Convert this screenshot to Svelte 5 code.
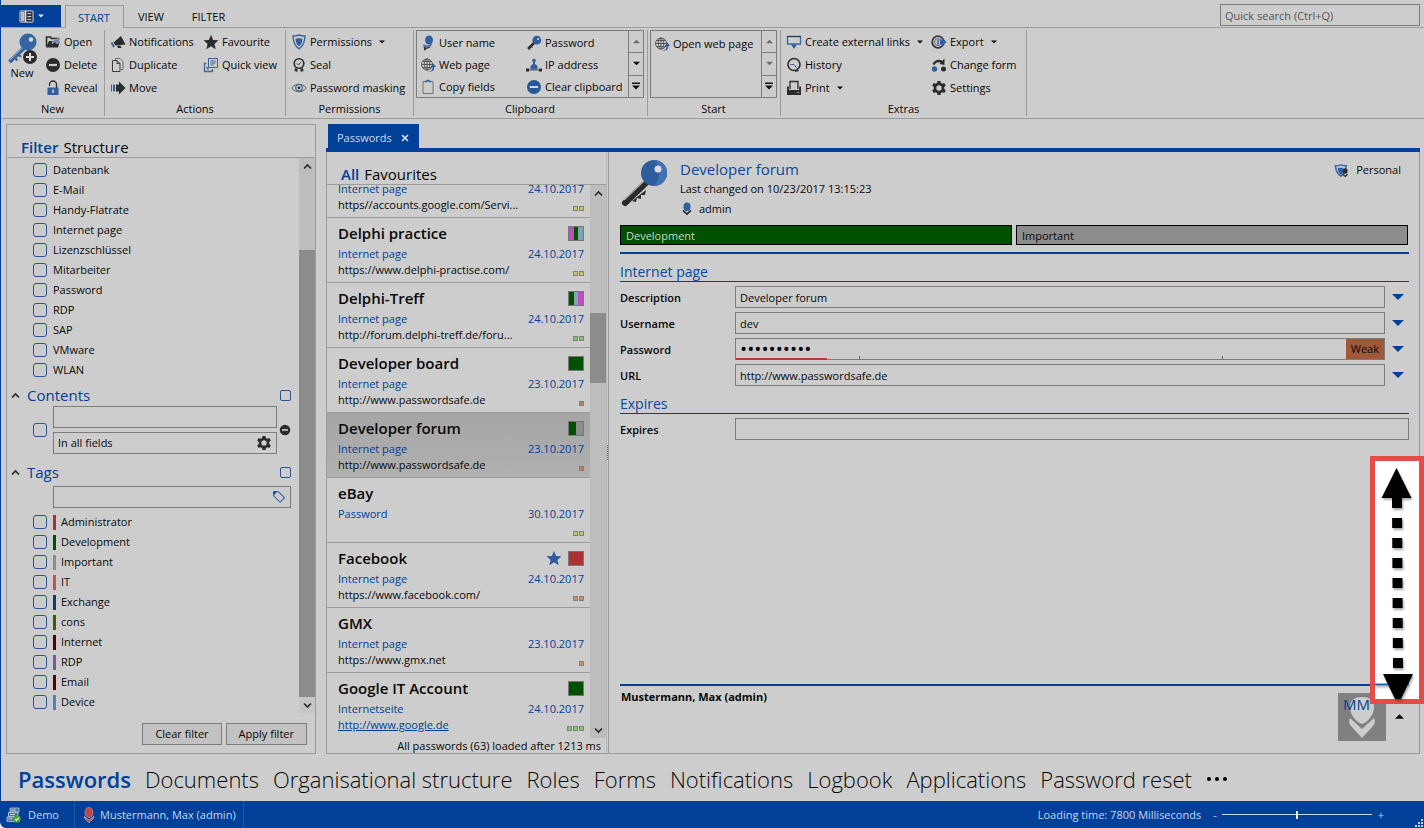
<script lang="ts">
	interface Entry {
		title: string;
		form: string;
		date: string;
		url?: string;
		link?: boolean;
		tags: string[];
		strength: string[];
		favourite?: boolean;
		selected?: boolean;
	}

	// --- Filter panel data ---
	const forms = ['Datenbank', 'E-Mail', 'Handy-Flatrate', 'Internet page', 'Lizenzschlüssel', 'Mitarbeiter', 'Password', 'RDP', 'SAP', 'VMware', 'WLAN'];

	const tags = [
		{ name: 'Administrator', color: '#a93232' },
		{ name: 'Development', color: '#005000' },
		{ name: 'Important', color: '#8c8c8c' },
		{ name: 'IT', color: '#c25450' },
		{ name: 'Exchange', color: '#143a6e' },
		{ name: 'cons', color: '#3c5a00' },
		{ name: 'Internet', color: '#560000' },
		{ name: 'RDP', color: '#76589c' },
		{ name: 'Email', color: '#560000' },
		{ name: 'Device', color: '#4f82c0' }
	];

	// --- Password list data ---
	const GREEN = '#005000';
	const PINK = '#b850c0';
	const TEAL = '#80a4b0';
	const YELLOW = '#c2c46e';
	const ORANGE = '#c8956a';
	const BROWN = '#b47c64';
	const LIME = '#86c070';

	const entries: Entry[] = [
		{ title: '', form: 'Internet page', date: '24.10.2017', url: 'https//accounts.google.com/Servi...', tags: [], strength: [YELLOW, YELLOW] },
		{ title: 'Delphi practice', form: 'Internet page', date: '24.10.2017', url: 'https://www.delphi-practise.com/', tags: [PINK, GREEN, TEAL], strength: [YELLOW, YELLOW] },
		{ title: 'Delphi-Treff', form: 'Internet page', date: '24.10.2017', url: 'http://forum.delphi-treff.de/foru...', tags: [GREEN, TEAL, PINK], strength: [LIME, LIME] },
		{ title: 'Developer board', form: 'Internet page', date: '23.10.2017', url: 'http://www.passwordsafe.de', tags: [GREEN], strength: [BROWN] },
		{ title: 'Developer forum', form: 'Internet page', date: '23.10.2017', url: 'http://www.passwordsafe.de', tags: [GREEN, '#8c8c8c'], strength: [BROWN], selected: true },
		{ title: 'eBay', form: 'Password', date: '30.10.2017', tags: [], strength: [YELLOW, YELLOW] },
		{ title: 'Facebook', form: 'Internet page', date: '24.10.2017', url: 'https://www.facebook.com/', tags: ['#a93232'], strength: [ORANGE, ORANGE], favourite: true },
		{ title: 'GMX', form: 'Internet page', date: '23.10.2017', url: 'https://www.gmx.net', tags: [], strength: [ORANGE] },
		{ title: 'Google IT Account', form: 'Internetseite', date: '24.10.2017', url: 'http://www.google.de', link: true, tags: [GREEN], strength: [LIME, LIME, LIME] }
	];

	const modules = ['Passwords', 'Documents', 'Organisational structure', 'Roles', 'Forms', 'Notifications', 'Logbook', 'Applications', 'Password reset'];

	let activeModule = $state('Passwords');
	let zoom = $state(50);

	// --- Icons, all on a 16x16 grid ---
	const icons: Record<string, string> = {
		file: '<rect x="1" y="2" width="14" height="12" rx="1" fill="#2a2f3a" stroke="#e2e2e2"/><path d="M7 2v12" stroke="#e2e2e2" stroke-width="1.5"/><path d="M2 3h4v10H2z" fill="#b9c4d2"/><path d="M9 5h4M9 8h4M9 11h4" stroke="#e2e2e2"/>',
		open: '<path d="M1.500 12.500V3h4l1 1.500h7V6" fill="none" stroke="#2b2b2b" stroke-width="1.600"/><path fill="#2b2b2b" d="M1 13.500l3-6.500h11l-2 6.500z"/><path fill="#6d87a6" stroke="#cdcdcd" stroke-width=".5" d="M7 10c0-3.500 3-5.500 5-4.500l.8-1.500 2.700 5-4.500.5.700-1.200C10 7.800 8.500 8 7 10z"/>',
		delete: '<circle cx="8" cy="8" r="7" fill="#2b2b2b"/><path d="M4 8h8" stroke="#cdcdcd" stroke-width="2.200"/>',
		reveal: '<path d="M4.500 6V4.500a3.500 3.500 0 0 1 7 0V8" fill="none" stroke="#2b2b2b" stroke-width="1.300"/><rect x="2.500" y="7.500" width="11" height="7.500" fill="#2f5f9e"/><path d="M8 9.500V13" stroke="#cdcdcd" stroke-width="1.600"/>',
		notify: '<path fill="#2b2b2b" d="M3.500 8.500L11 2l4.500 8.500-10 1zM7 12l3.500-.4 1 2.400H8z"/><path d="M1.500 8.500L4 13" stroke="#3f5f9b" stroke-width="2"/>',
		duplicate: '<path d="M5.500 4V1.500h4.500l3 3v8h-2" fill="none" stroke="#5a6b86"/><path d="M2.500 3.500h4.500l3 3v8H2.500zM7 3.500v3h3" fill="#cdcdcd" stroke="#3c3c3c"/>',
		move: '<path fill="#2b2b2b" d="M6 4.500h3V1.500l6.500 6.500L9 14.500v-3H6z"/><path fill="#2f5f9e" d="M3 4.500h2v7H3zM1 4.500h1v7H1z"/>',
		star: '<path fill="#2b2b2b" d="M8 .8l2.100 5.100 5.400.4-4.100 3.600 1.300 5.300L8 12.300l-4.700 2.900 1.300-5.300L.5 6.300l5.400-.4z"/>',
		quick: '<path d="M5.500 1.500h9v9h-9z" fill="none" stroke="#3b5f92"/><path d="M7.500 4h5M7.500 6h5M7.500 8h3" stroke="#3b5f92"/><path d="M3.500 6.500h-2v8h8V12M3.500 10l2 2.500" fill="none" stroke="#49678f" stroke-width="1.300"/>',
		shield: '<path d="M8 1c2 .8 4 1.200 6 1-.2 6-1.500 10-6 12.800C3.500 12 2.200 8 2 2c2 .2 4-.2 6-1z" fill="none" stroke="#3b64a0" stroke-width="1.400"/><path fill="#2f5f9e" d="M8 4c1.300.5 2.200.7 3.500.7C11.300 8.500 10.300 10.500 8 12.300 5.700 10.500 4.700 8.500 4.500 4.700 5.800 4.700 6.700 4.500 8 4z"/>',
		seal: '<circle cx="8" cy="6.500" r="4.800" fill="none" stroke="#2b2b2b" stroke-width="1.600"/><path d="M6 6.500l1.500 1.500L10 5" fill="none" stroke="#444"/><path fill="#2b2b2b" d="M4 11l2.800 1.500L6 15.500 5 14l-1.500.5zM12 11l-2.800 1.500.8 3L11 14l1.500.5z"/>',
		eye: '<path d="M.8 8C4 3 12 3 15.200 8 12 13 4 13 .8 8z" fill="none" stroke="#5a6472"/><circle cx="8" cy="7.800" r="3.300" fill="none" stroke="#3d5c86" stroke-width="1.200"/><circle cx="8" cy="7.800" r="1.400" fill="#2b2b2b"/>',
		user: '<ellipse cx="9" cy="5" rx="4" ry="4.500" fill="#2f5f9e"/><path d="M3.500 9.500c1 2.500 5 2.500 8-.3" fill="none" stroke="#2f5f9e" stroke-width="1.500"/><path fill="#2b2b2b" d="M3.500 11.500c3 1.500 5 1 7.500-.5-1 2-2.500 2.500-4.500 2.800L4.500 16z"/>',
		globe: '<g fill="none" stroke="#4c4c4c" stroke-width=".9"><circle cx="7" cy="7.500" r="5.500"/><ellipse cx="7" cy="7.500" rx="2.700" ry="5.500"/><path d="M7 2v11M1.500 7.500h11M2.500 4.500h9M2.500 10.500h9"/></g><path fill="#2f5f9e" d="M8.500 14.500c3 0 4.200-2 4-4.500H10.800L13.400 6.500 16 10h-1.600c.2 3.500-2.200 5.300-5.900 4.500z"/>',
		copy: '<path d="M5 2.500H3v12h10v-12h-2" fill="none" stroke="#6a6a6a" stroke-width=".9"/><path d="M5 2.500h1.500l.8-1h1.400l.8 1H11" fill="none" stroke="#2f5f9e" stroke-width="1.500"/>',
		key: '<path d="M8.500 7.500L2 14" stroke="#2b2b2b" stroke-width="2.600"/><path d="M5 11l1.500 1.500M3 13l1.300 1.300" stroke="#2b2b2b"/><circle cx="10.800" cy="5.200" r="4.400" fill="#2f5f9e"/><circle cx="12.200" cy="4" r="1.100" fill="#cdcdcd"/>',
		ip: '<path fill="#2f5f9e" d="M7 3h2v4l2.500 2v3.500h-7V9L7 7z"/><circle cx="8" cy="3.500" r="1.800" fill="#2f5f9e"/><path d="M0 13h16" stroke="#555"/><path fill="#2b2b2b" d="M0 11.500h3v3H0zM13 11.500h3v3h-3z"/>',
		clear: '<circle cx="8" cy="8" r="7" fill="#2a5796"/><path d="M3.800 8h8.400" stroke="#d6d6d6" stroke-width="2"/>',
		links: '<path d="M1.500 2.500h13v7.500h-13z" fill="none" stroke="#3b64a0" stroke-width="1.300"/><path d="M1 2.500h14" stroke="#333c4c"/><path fill="#2f5f9e" d="M5 10.500h6L8 15z"/>',
		history: '<circle cx="8" cy="7.500" r="6" fill="none" stroke="#2b2b2b" stroke-width="1.600"/><path d="M4.500 7.500H8l3 4" fill="none" stroke="#3b5f92"/><path d="M9 14l3.500-.5" stroke="#2b2b2b" stroke-width="1.500"/>',
		print: '<path d="M4 9V1.500h8V9" fill="none" stroke="#2b2b2b" stroke-width="1.300"/><path fill="#2b2b2b" d="M1 6.500h1.800V10h10.400V6.500H15V15H1z"/><path d="M10.500 12.500h3" stroke="#8a8a8a"/>',
		export: '<circle cx="7" cy="8" r="5.800" fill="none" stroke="#3a3a3a" stroke-width="1.800"/><circle cx="7" cy="8" r="3.500" fill="none" stroke="#6c6c6c"/><path d="M7 5.500v5" stroke="#2f5f9e" stroke-width="1.500"/><path fill="#2f5f9e" d="M9 5.500h2V3.500L15.500 8 11 12.500v-2H9z"/>',
		change: '<circle cx="3.500" cy="12" r="2.700" fill="#2f5f9e"/><circle cx="12.500" cy="12" r="2.500" fill="#2b2b2b"/><path d="M2.500 7.500C4 4 8 3 11 5" fill="none" stroke="#2b2b2b" stroke-width="2.400"/><path fill="#2b2b2b" d="M13.500 1.500V8L8.500 7z"/>',
		gear: '<path fill="#2b2b2b" fill-rule="evenodd" d="M6.500 1h3l.4 2 1.400.8 2-.8 1.500 2.600-1.600 1.400v2l1.600 1.400-1.500 2.600-2-.8-1.400.8-.4 2h-3l-.4-2-1.400-.8-2 .8-1.500-2.600L2.800 9V7L1.200 5.600 2.700 3l2 .8L6.100 3zM8 5.300a2.700 2.700 0 1 0 0 5.400 2.700 2.700 0 0 0 0-5.400z"/>',
		person: '<ellipse cx="8" cy="5.500" rx="4" ry="4.800" fill="#2f5f9e"/><path d="M3.500 9.500L8 13.800l4.500-4.300" fill="none" stroke="#2b2b2b" stroke-width="2"/>',
		personal: '<path d="M7.500 2c2 .8 3.500 1 5.500 1-.2 6-1.500 8.500-5.500 11C3.500 11.500 2 8 1.500 3c2 0 4-.2 6-1z" fill="none" stroke="#3b64a0" stroke-width="1.600"/><path fill="#2f5f9e" d="M4 5h6v6l-2.500 1.500C5 11 4 8 4 5z"/><ellipse cx="12" cy="8.500" rx="2.500" ry="3" fill="#2b2b2b"/><path d="M9.500 12l2.500 2.300 2.500-2.300" fill="none" stroke="#2b2b2b" stroke-width="1.400"/>',
		tag: '<path d="M2 2h5.500l6.800 6.800-5 5L2 7z" fill="none" stroke="#3b64a0" stroke-width="1.300"/><path fill="#1d4b8c" d="M1.500 1.500h4.500L2 6.500z"/><circle cx="5" cy="5" r="1" fill="#cdcdcd"/>',
		server: '<path fill="#4b6f9d" stroke="#c5ced8" stroke-width=".8" d="M5 1h9v4H5zM3.500 5.500H13v4H3.500zM2 10h9v4.500H2z"/><path d="M6 3h5M5 7.500h5M3.500 12h4" stroke="#d0d6dd"/><circle cx="12" cy="12" r="3.700" fill="#47a33a"/><path d="M10.200 12l1.400 1.400 2.300-2.700" fill="none" stroke="#dff0da" stroke-width="1.200"/>',
		login: '<ellipse cx="8" cy="5.500" rx="4" ry="5" fill="#c04444" stroke="#d8a8a8" stroke-width=".6"/><path d="M3 9.500c1 3 3 4.500 5 6 2-1.500 4-3 5-6l-5 3.500z" fill="#a03c48" stroke="#d0c0c8" stroke-width=".8"/>'
	};
</script>

{#snippet icon(name: string, size = 16)}
	<svg class="icon" width={size} height={size} viewBox="0 0 16 16" aria-hidden="true">{@html icons[name]}</svg>
{/snippet}

{#snippet arrow(dir: string, size = 6)}
	<svg class="icon" width={size} height={size} viewBox="0 0 8 8" aria-hidden="true">
		<path d={dir === 'up' ? 'M0 6l4-4 4 4z' : 'M0 2l4 4 4-4z'} fill="currentColor" />
	</svg>
{/snippet}

{#snippet chevron(dir: string)}
	<svg class="icon" width="9" height="9" viewBox="0 0 9 9" aria-hidden="true">
		<path d={dir === 'up' ? 'M1 6.500L4.500 3 8 6.500' : 'M1 2.500L4.500 6 8 2.500'} fill="none" stroke="#2b2b2b" stroke-width="1.700" />
	</svg>
{/snippet}

{#snippet cmd(name: string, label: string, drop = false)}
	<button class="cmd">
		{@render icon(name)}<span>{label}</span>
		{#if drop}{@render arrow('down')}{/if}
	</button>
{/snippet}

{#snippet spinner(canPage: boolean)}
	<div class="spinner">
		<button disabled aria-label="Previous">{@render arrow('up', 7)}</button>
		<button disabled={!canPage} aria-label="Next">{@render arrow('down', 7)}</button>
		<button aria-label="Show all">
			<svg width="8" height="8" viewBox="0 0 8 8" aria-hidden="true"><path d="M0 .5h8v1.500H0zM0 3.500h8l-4 4z" fill="#111" /></svg>
		</button>
	</div>
{/snippet}

<div class="app">
	<div class="tabs">
		<button class="file-menu" aria-label="Application menu">
			{@render icon('file', 15)}
			{@render arrow('down')}
		</button>
		<button class="ribbon-tab active">START</button>
		<button class="ribbon-tab">VIEW</button>
		<button class="ribbon-tab">FILTER</button>
		<input class="quick-search" type="search" placeholder="Quick search (Ctrl+Q)" aria-label="Quick search" />
	</div>

	<div class="ribbon">
		<section class="group g-new">
			<div class="commands">
				<button class="big">
					<svg width="32" height="32" viewBox="0 0 32 32" aria-hidden="true">
						<path d="M19 14L3.500 29" stroke="#3a6299" stroke-width="4" />
						<path d="M17.500 14L4 27" stroke="#9fb2cb" stroke-width="1" />
						<path d="M9 25l2.500 2.500M12.500 21.500l2.500 2.500" stroke="#3a6299" stroke-width="2" />
						<circle cx="22" cy="9" r="8.500" fill="#3565a3" />
						<circle cx="25" cy="6.500" r="2.200" fill="#d8d8d8" />
						<circle cx="24" cy="24" r="7" fill="#2b2b2b" />
						<path d="M20 24h8M24 20v8" stroke="#dedede" stroke-width="2" />
					</svg>
					<span>New</span>
				</button>
				<div class="col">
					{@render cmd('open', 'Open')}
					{@render cmd('delete', 'Delete')}
					{@render cmd('reveal', 'Reveal')}
				</div>
			</div>
			<h2>New</h2>
		</section>
		<section class="group g-actions">
			<div class="commands inset">
				<div class="col">
					{@render cmd('notify', 'Notifications')}
					{@render cmd('duplicate', 'Duplicate')}
					{@render cmd('move', 'Move')}
				</div>
				<div class="col">
					{@render cmd('star', 'Favourite')}
					{@render cmd('quick', 'Quick view')}
				</div>
			</div>
			<h2>Actions</h2>
		</section>
		<section class="group g-permissions">
			<div class="commands inset">
				<div class="col">
					{@render cmd('shield', 'Permissions', true)}
					{@render cmd('seal', 'Seal')}
					{@render cmd('eye', 'Password masking')}
				</div>
			</div>
			<h2>Permissions</h2>
		</section>
		<section class="group g-clipboard">
			<div class="gallery">
				<div class="col">
					{@render cmd('user', 'User name')}
					{@render cmd('globe', 'Web page')}
					{@render cmd('copy', 'Copy fields')}
				</div>
				<div class="col">
					{@render cmd('key', 'Password')}
					{@render cmd('ip', 'IP address')}
					{@render cmd('clear', 'Clear clipboard')}
				</div>
				{@render spinner(true)}
			</div>
			<h2>Clipboard</h2>
		</section>
		<section class="group g-start">
			<div class="gallery">
				<div class="col">
					{@render cmd('globe', 'Open web page')}
				</div>
				{@render spinner(false)}
			</div>
			<h2>Start</h2>
		</section>
		<section class="group g-extras">
			<div class="commands inset">
				<div class="col">
					{@render cmd('links', 'Create external links', true)}
					{@render cmd('history', 'History')}
					{@render cmd('print', 'Print', true)}
				</div>
				<div class="col">
					{@render cmd('export', 'Export', true)}
					{@render cmd('change', 'Change form')}
					{@render cmd('gear', 'Settings')}
				</div>
			</div>
			<h2>Extras</h2>
		</section>
	</div>

	<main>
		<aside class="filter">
			<div class="pane-head">
				<button class="current">Filter</button>
				<button>Structure</button>
			</div>
			<div class="scroll-area">
				<div class="filter-body">
					{#each forms as form}
						<label class="check-row"><input type="checkbox" /><span>{form}</span></label>
					{/each}

					<div class="section-head">
						{@render chevron('up')}
						<h3>Contents</h3>
						<input class="small" type="checkbox" aria-label="Link contents" />
					</div>
					<div class="contents">
						<input type="checkbox" aria-label="Use contents filter" />
						<div class="fields">
							<input class="box" type="text" aria-label="Search text" />
							<div class="box with-icon">
								<select aria-label="Search in"><option>In all fields</option></select>
								<button aria-label="Field settings">{@render icon('gear')}</button>
							</div>
						</div>
						<button aria-label="Remove">{@render icon('delete', 12)}</button>
					</div>

					<div class="section-head tags-head">
						{@render chevron('up')}
						<h3>Tags</h3>
						<input class="small" type="checkbox" aria-label="Link tags" />
					</div>
					<div class="box with-icon tag-search">
						<input type="text" aria-label="Search tags" />
						<button aria-label="Choose tag">{@render icon('tag', 14)}</button>
					</div>
					{#each tags as tag}
						<label class="check-row">
							<input type="checkbox" />
							<i class="stripe" style="background: {tag.color}"></i>
							<span>{tag.name}</span>
						</label>
					{/each}
				</div>
				<div class="scrollbar">
					<span class="end">{@render chevron('up')}</span>
					<span class="filter-gap"></span>
					<span class="thumb filter-thumb"></span>
					<span class="end light">{@render chevron('down')}</span>
				</div>
			</div>
			<div class="filter-actions">
				<button class="push">Clear filter</button>
				<button class="push">Apply filter</button>
			</div>
		</aside>

		<div class="workspace">
			<div class="doc-tabs">
				<div class="doc-tab">
					<span>Passwords</span>
					<button aria-label="Close tab">
						<svg width="8" height="8" viewBox="0 0 8 8" aria-hidden="true"><path d="M1 1l6 6M7 1L1 7" stroke="#d8e2ee" stroke-width="1.600" /></svg>
					</button>
				</div>
			</div>
			<div class="doc">
				<div class="list-pane">
					<div class="pane-head">
						<button class="current">All</button>
						<button>Favourites</button>
					</div>
					<div class="scroll-area">
						<ul class="entries">
							{#each entries as entry}
								<li class:selected={entry.selected}>
									<div class="line title-line">
										<h4>{entry.title}</h4>
										{#if entry.favourite}
											<svg class="icon" width="16" height="16" viewBox="0 0 16 16" aria-hidden="true">
												<path fill="#2c5a9c" d="M8 .8l2.100 5.100 5.400.4-4.100 3.600 1.300 5.300L8 12.300l-4.700 2.900 1.300-5.300L.5 6.300l5.400-.4z" />
											</svg>
										{/if}
										{#if entry.tags.length}
											<div class="swatch">
												{#each entry.tags as color}<i style="background: {color}"></i>{/each}
											</div>
										{/if}
									</div>
									<div class="line meta"><span>{entry.form}</span><span>{entry.date}</span></div>
									<div class="line">
										{#if entry.link}<a href="#open">{entry.url}</a>{:else}<span>{entry.url ?? ''}</span>{/if}
										<div class="strength">
											{#each entry.strength as color}<i style="background: {color}"></i>{/each}
										</div>
									</div>
								</li>
							{/each}
						</ul>
						<div class="scrollbar">
							<span class="end">{@render chevron('up')}</span>
							<span class="list-gap"></span>
							<span class="thumb list-thumb"></span>
							<span class="rest"></span>
							<span class="end">{@render chevron('down')}</span>
						</div>
					</div>
					<p class="list-status">All passwords (63) loaded after 1213 ms</p>
				</div>

				<div class="splitter"><span></span></div>

				<div class="detail">
					<header>
						<svg class="icon" width="48" height="48" viewBox="0 0 48 48" aria-hidden="true">
							<path d="M28 21L5 43" stroke="#2b2b2b" stroke-width="6" stroke-linecap="round" />
							<path d="M25 20L4 40" stroke="#a8a8a8" stroke-width="1.500" />
							<path d="M12 41l4 1 1-4 4 1 0-4 4 0 1-5" fill="#2b2b2b" />
							<circle cx="34" cy="13" r="13" fill="#2f5c9c" />
							<path d="M34 26a13 13 0 0 0 0-26c7 7 7 19 0 26z" fill="#3f72b4" />
							<circle cx="38" cy="9" r="3.500" fill="#dcdcdc" />
						</svg>
						<div class="heading">
							<h1>Developer forum</h1>
							<p class="changed">Last changed on 10/23/2017 13:15:23</p>
							<p class="owner">{@render icon('person', 14)}<span>admin</span></p>
						</div>
						<div class="personal">{@render icon('personal', 15)}<span>Personal</span></div>
					</header>

					<div class="tag-bars">
						<span class="bar dev">Development</span>
						<span class="bar important">Important</span>
					</div>

					<form>
						<h3>Internet page</h3>
						<div class="field">
							<label for="description">Description</label>
							<input id="description" class="box" type="text" value="Developer forum" />
							<button type="button" aria-label="Description menu">{@render arrow('down', 12)}</button>
						</div>
						<div class="field">
							<label for="username">Username</label>
							<input id="username" class="box" type="text" value="dev" />
							<button type="button" aria-label="Username menu">{@render arrow('down', 12)}</button>
						</div>
						<div class="field">
							<label for="password">Password</label>
							<div class="box password">
								<input id="password" type="password" value="passwordab" />
								<span class="badge">Weak</span>
								<span class="meter"></span>
								<i class="tick first"></i>
								<i class="tick second"></i>
							</div>
							<button type="button" aria-label="Password menu">{@render arrow('down', 12)}</button>
						</div>
						<div class="field">
							<label for="url">URL</label>
							<input id="url" class="box" type="text" value="http://www.passwordsafe.de" />
							<button type="button" aria-label="URL menu">{@render arrow('down', 12)}</button>
						</div>
						<h3>Expires</h3>
						<div class="field">
							<label for="expires">Expires</label>
							<input id="expires" class="box" type="text" />
						</div>
					</form>

					<footer>
						<strong>Mustermann, Max (admin)</strong>
						<svg class="avatar" width="48" height="48" viewBox="0 0 48 48" role="img" aria-label="MM">
							<rect width="48" height="48" fill="#808080" />
							<path fill="#cdcdcd" d="M24 4c7 0 12 3 12 10 0 8-6 15-12 17-6-2-12-9-12-17 0-7 5-10 12-10z" />
							<path fill="#cdcdcd" d="M12 25l12 11 12-11c1.500 3 1 6-1 8L24 45 13 33c-2-2-2.500-5-1-8z" />
							<text x="5" y="17" font-size="15" fill="#00438f">MM</text>
						</svg>
						<button class="expand" aria-label="Expand footer">{@render arrow('up', 9)}</button>
					</footer>

					<div class="resize-hint">
						<svg width="44" height="238" viewBox="0 0 44 238" aria-hidden="true">
							<path d="M0 223.500h34" stroke="#1668c0" stroke-width="2" />
							<path d="M21.500 7L36.500 37h-30z" />
							<path d="M22 37L23 207" stroke="#000" stroke-width="10" stroke-dasharray="10 10" />
							<path d="M8 213h30L26 238h-6z" />
						</svg>
					</div>
				</div>
			</div>
		</div>
	</main>

	<nav>
		{#each modules as name}
			<button class:active={name === activeModule} onclick={() => (activeModule = name)}>{name}</button>
		{/each}
		<button aria-label="More modules">
			<svg width="22" height="6" viewBox="0 0 22 6" aria-hidden="true">
				<circle cx="3" cy="3" r="2" /><circle cx="11" cy="3" r="2" /><circle cx="19" cy="3" r="2" />
			</svg>
		</button>
	</nav>

	<div class="status">
		<span class="cell demo">{@render icon('server')}<span>Demo</span></span>
		<span class="cell login">{@render icon('login')}<span>Mustermann, Max (admin)</span></span>
		<span class="loading">Loading time: 7800 Milliseconds</span>
		<button aria-label="Zoom out">-</button>
		<input type="range" min="0" max="100" bind:value={zoom} aria-label="Zoom" />
		<button aria-label="Zoom in">+</button>
		<svg class="grip" width="9" height="9" viewBox="0 0 9 9" aria-hidden="true">
			<path fill="#c5d4e8" d="M6 0h2v2H6zM3 3h2v2H3zM6 3h2v2H6zM0 6h2v2H0zM3 6h2v2H3zM6 6h2v2H6z" />
		</svg>
	</div>
</div>

<style>
	:global(body) {
		margin: 0;
		background: #fff;
	}

	.app {
		--bg: #cdcdcd;
		--blue: #004099;
		--line: #9c9c9c;
		--field: #7c7c7c;
		display: flex;
		flex-direction: column;
		height: 100vh;
		min-height: 700px;
		box-sizing: border-box;
		overflow: hidden;
		background: var(--bg);
		border-left: 1px solid var(--blue);
		border-bottom-left-radius: 6px;
		font: 11px/16px "Segoe UI", "Open Sans", "Noto Sans", sans-serif;
		color: #080808;
	}

	.app * {
		box-sizing: border-box;
	}

	button,
	input,
	select {
		font: inherit;
		color: inherit;
	}

	button {
		display: flex;
		align-items: center;
		padding: 0;
		border: none;
		background: none;
		white-space: nowrap;
	}

	h1,
	h2,
	h3,
	h4,
	p,
	ul {
		margin: 0;
		padding: 0;
		font-size: inherit;
		font-weight: normal;
		list-style: none;
	}

	.icon {
		display: block;
		flex: none;
	}

	/* --- Ribbon --- */
	.tabs {
		display: flex;
		align-items: flex-end;
		height: 28px;
		flex: none;
		padding-right: 4px;
		border-bottom: 1px solid var(--line);
	}

	.file-menu {
		width: 60px;
		height: 22px;
		gap: 4px;
		justify-content: center;
		background: var(--blue);
		color: #dfe6ee;
		margin-right: 4px;
	}

	.ribbon-tab {
		height: 22px;
		padding: 2px 14px 0;
	}

	.ribbon-tab.active {
		height: 23px;
		margin-bottom: -1px;
		padding: 1px 13px 0 12px;
		border: 1px solid var(--line);
		border-bottom: none;
		background: var(--bg);
		color: var(--blue);
	}

	.quick-search {
		width: 200px;
		height: 22px;
		margin: 0 0 1px auto;
		padding: 0 4px;
		border: 1px solid var(--field);
		background: none;
		outline: none;
	}

	.quick-search::placeholder {
		color: #555;
		opacity: 1;
	}

	.ribbon {
		display: flex;
		flex: none;
		height: 91px;
		padding: 2px 0;
		border-bottom: 1px solid var(--line);
	}

	.group {
		display: flex;
		flex-direction: column;
		flex: none;
		border-right: 1px solid var(--line);
	}

	.group h2 {
		height: 16px;
		text-align: center;
	}

	.commands,
	.gallery {
		display: flex;
		flex: none;
	}

	.commands {
		height: 71px;
	}

	.inset {
		padding-left: 5px;
	}

	.col {
		display: flex;
		flex-direction: column;
	}

	.cmd {
		height: 23px;
		gap: 3px;
	}

	.cmd span {
		padding-right: 4px;
	}

	.big {
		flex-direction: column;
		width: 36px;
		margin: 3px 5px 0 3px;
	}

	.g-new { width: 104px; }
	.g-actions { width: 181px; }
	.g-actions .col:first-child { width: 93px; }
	.g-permissions { width: 128px; }
	.g-clipboard { width: 234px; padding: 0 3px 0 2px; }
	.g-start { width: 133px; padding: 0 3px 0 2px; }
	.g-extras { width: 246px; }
	.g-extras .col:first-child { width: 145px; }

	.gallery {
		height: 68px;
		margin-bottom: 3px;
		border: 1px solid var(--field);
	}

	.gallery .col {
		flex: none;
		padding-left: 3px;
		margin-top: 1px;
	}

	.gallery .cmd {
		height: 22px;
		padding-top: 1px;
	}

	.g-clipboard .col:first-child {
		width: 106px;
	}

	.spinner {
		display: flex;
		flex-direction: column;
		width: 15px;
		margin-left: auto;
		border-left: 1px solid var(--field);
	}

	.spinner button {
		flex: 1;
		justify-content: center;
	}

	.spinner button + button {
		border-top: 1px solid var(--field);
	}

	.spinner button:disabled {
		color: #6c6c6c;
	}

	/* --- Shared panes --- */
	main {
		display: flex;
		flex: 1;
		min-height: 0;
		gap: 10px;
		padding: 5px 4px 0 5px;
	}

	.pane-head {
		display: flex;
		align-items: flex-end;
		gap: 5px;
		height: 33px;
		flex: none;
		padding-left: 14px;
		border-bottom: 1px solid var(--line);
		font-size: 15px;
		line-height: 20px;
	}

	.pane-head .current {
		color: var(--blue);
		font-weight: 600;
	}

	.scroll-area {
		display: flex;
		flex: 1;
		min-height: 0;
	}

	.scrollbar {
		display: flex;
		flex-direction: column;
		flex: none;
		width: 16px;
		background: #bdbdbd;
	}

	.scrollbar .end {
		display: flex;
		align-items: center;
		justify-content: center;
		height: 16px;
	}

	.scrollbar .light {
		background: #c6c6c6;
	}

	.thumb {
		background: #8c8c8c;
	}

	.filter-gap { flex: 76; }
	.filter-thumb { flex: 447; }
	.list-gap { flex: 112; }
	.list-thumb { flex: 70; }
	.rest { flex: 338; }

	.box {
		height: 22px;
		padding: 0 4px;
		border: 1px solid var(--field);
		border-radius: 0;
		background: none;
		outline: none;
	}

	input[type='checkbox'] {
		appearance: none;
		flex: none;
		width: 14px;
		height: 14px;
		margin: 0;
		border: 1px solid #2c548e;
		border-radius: 3px;
	}

	input[type='checkbox'].small {
		width: 11px;
		height: 11px;
		border-radius: 2px;
		margin-left: auto;
	}

	/* --- Filter --- */
	.filter {
		display: flex;
		flex-direction: column;
		flex: none;
		width: 310px;
		border: 1px solid var(--line);
	}

	.filter-body {
		flex: 1;
		min-width: 0;
		padding-top: 2px;
		overflow: hidden;
	}

	.check-row {
		display: flex;
		align-items: center;
		height: 20px;
		padding-left: 26px;
		gap: 6px;
	}

	.stripe {
		width: 3px;
		height: 15px;
		margin-right: -1px;
	}

	.section-head {
		display: flex;
		align-items: center;
		height: 20px;
		margin: 5px 0 1px;
		padding: 0 8px 0 4px;
		gap: 7px;
	}

	.section-head h3 {
		font-size: 15px;
		color: var(--blue);
	}

	.contents {
		display: flex;
		align-items: center;
		padding: 0 8px 0 26px;
	}

	.fields {
		display: flex;
		flex-direction: column;
		flex: 1;
		min-width: 0;
		gap: 4px;
		margin: 0 2px 0 6px;
	}

	.with-icon {
		display: flex;
		align-items: center;
	}

	.with-icon select,
	.with-icon input {
		appearance: none;
		flex: 1;
		min-width: 0;
		padding: 0;
		border: none;
		background: none;
		outline: none;
	}

	.tags-head {
		margin-top: 8px;
	}

	.tag-search {
		margin: 4px 8px 4px 46px;
	}

	.filter-actions {
		display: flex;
		justify-content: flex-end;
		gap: 4px;
		padding: 10px 8px 8px;
	}

	.push {
		height: 22px;
		padding: 0 12px;
		border: 1px solid var(--field);
		background: #c2c2c2;
	}

	/* --- Document area --- */
	.workspace {
		display: flex;
		flex-direction: column;
		flex: 1;
		min-width: 0;
	}

	.doc-tabs {
		display: flex;
		flex: none;
		padding-left: 2px;
		border-bottom: 4px solid var(--blue);
	}

	.doc-tab {
		display: flex;
		align-items: center;
		height: 24px;
		padding: 3px 10px 0 9px;
		gap: 9px;
		background: var(--blue);
		color: #cfdcec;
	}

	.doc {
		display: flex;
		flex: 1;
		min-height: 0;
		border: 1px solid var(--line);
		border-top: none;
	}

	.list-pane {
		display: flex;
		flex-direction: column;
		flex: none;
		width: 279px;
	}

	.entries {
		display: flex;
		flex-direction: column;
		justify-content: flex-end;
		flex: 1;
		min-width: 0;
		overflow: hidden;
	}

	.entries li {
		flex: none;
		height: 65px;
		padding: 4px 6px 0 11px;
		border-bottom: 1px solid var(--line);
	}

	.entries li:last-child {
		border-bottom-color: transparent;
	}

	.entries .selected {
		background: linear-gradient(#a6a6a6, #b0b0b0);
	}

	.line {
		display: flex;
		align-items: center;
		justify-content: space-between;
		height: 16px;
		white-space: nowrap;
	}

	.title-line {
		height: 22px;
		margin-bottom: 2px;
		gap: 6px;
	}

	.title-line h4 {
		flex: 1;
		font-size: 15px;
		font-weight: 600;
	}

	.meta,
	.entries a {
		color: var(--blue);
	}

	.swatch {
		display: flex;
		width: 16px;
		height: 15px;
		border: 1px solid #777;
	}

	.swatch i {
		flex: 1;
	}

	.strength {
		display: flex;
		gap: 1px;
		padding-top: 6px;
	}

	.strength i {
		width: 5px;
		height: 5px;
		border: 1px solid #808080;
	}

	.list-status {
		height: 15px;
		padding-right: 5px;
		line-height: 15px;
		text-align: right;
	}

	.splitter {
		display: flex;
		align-items: center;
		flex: none;
		width: 3px;
		border-left: 1px solid #b6b6b6;
		border-right: 1px solid var(--line);
	}

	.splitter span {
		width: 1px;
		height: 16px;
		background: repeating-linear-gradient(#666 0 1px, transparent 1px 2px);
	}

	/* --- Detail --- */
	.detail {
		position: relative;
		display: flex;
		flex-direction: column;
		flex: 1;
		min-width: 0;
		padding: 0 10px 0 11px;
	}

	.detail header {
		display: flex;
		align-items: flex-start;
		height: 73px;
		padding-top: 8px;
	}

	.heading {
		flex: 1;
		margin-left: 12px;
	}

	.detail h1 {
		font-size: 15px;
		line-height: 18px;
		color: #07499c;
	}

	.changed {
		line-height: 22px;
	}

	.owner {
		display: flex;
		align-items: center;
		gap: 5px;
		height: 18px;
	}

	.personal {
		display: flex;
		align-items: center;
		gap: 7px;
		padding: 2px 8px 0 0;
	}

	.tag-bars {
		display: flex;
		gap: 4px;
		padding: 0 1px 7px 0;
		border-bottom: 2px solid var(--blue);
	}

	.bar {
		flex: 1;
		height: 20px;
		padding: 0 5px;
		line-height: 20px;
		border: 1px solid #000;
	}

	.dev {
		background: #005000;
		color: #c8d8c8;
	}

	.important {
		background: #8c8c8c;
	}

	form {
		flex: 1;
	}

	.detail h3 {
		height: 28px;
		padding-top: 8px;
		margin-bottom: 4px;
		border-bottom: 1px solid var(--blue);
		font-size: 14px;
		line-height: 20px;
		color: #07499c;
	}

	.detail .field ~ h3 {
		height: 24px;
		padding-top: 4px;
	}

	.field {
		display: flex;
		align-items: center;
		margin-bottom: 4px;
	}

	.field label {
		flex: none;
		width: 115px;
		padding-top: 1px;
		font-weight: 600;
	}

	.field .box {
		flex: 1;
		min-width: 0;
	}

	.field > button {
		width: 24px;
		justify-content: flex-end;
		padding-right: 5px;
		color: var(--blue);
	}

	.field .password {
		position: relative;
		display: flex;
		align-items: center;
		padding-right: 0;
	}

	.password input {
		flex: 1;
		min-width: 0;
		height: 20px;
		padding: 0;
		border: none;
		background: none;
		outline: none;
		font-size: 19px;
	}

	.badge {
		align-self: stretch;
		padding: 2px 5px 0;
		background: #a05838;
	}

	.meter {
		position: absolute;
		left: 0;
		bottom: -1px;
		width: 14%;
		height: 2px;
		background: #b83a2c;
	}

	.tick {
		position: absolute;
		bottom: 0;
		width: 1px;
		height: 3px;
		background: #666;
	}

	.first { left: 19%; }
	.second { left: 75%; }

	footer {
		display: flex;
		align-items: flex-start;
		height: 69px;
		padding-left: 1px;
		border-top: 2px solid var(--blue);
	}

	footer strong {
		padding-top: 3px;
		line-height: 16px;
	}

	.avatar {
		margin: 7px 0 0 auto;
	}

	.expand {
		margin: 26px 5px 0 9px;
	}

	.resize-hint {
		position: absolute;
		right: -5px;
		bottom: 49px;
		border: 5px solid #e54c48;
		background: #fff;
	}

	.resize-hint svg {
		display: block;
		filter: drop-shadow(1px 2px 1px rgba(0, 0, 0, 0.35));
	}

	/* --- Module navigation --- */
	nav {
		display: flex;
		align-items: center;
		flex: none;
		height: 47px;
		padding: 2px 17px 0;
		gap: 14px;
		font-size: 22px;
		line-height: 32px;
		font-weight: 300;
	}

	nav button {
		height: 42px;
	}

	nav .active {
		color: var(--blue);
		font-weight: 600;
	}

	/* --- Status bar --- */
	.status {
		display: flex;
		align-items: center;
		flex: none;
		height: 27px;
		background: var(--blue);
		color: #c6d6ea;
	}

	.cell {
		display: flex;
		align-items: center;
		align-self: stretch;
		border-right: 1px solid #1c5aa8;
	}

	.demo {
		width: 74px;
		padding-left: 4px;
		gap: 7px;
	}

	.login {
		padding: 0 7px 0 6px;
		gap: 3px;
	}

	.loading {
		margin: 0 12px 0 auto;
	}

	.status input {
		appearance: none;
		width: 150px;
		height: 8px;
		margin: 0 6px 0 5px;
		background: linear-gradient(#c6d6ea, #c6d6ea) center / 100% 1px no-repeat;
	}

	.status input::-webkit-slider-thumb {
		appearance: none;
		width: 2px;
		height: 8px;
		background: #e6eef6;
	}

	.grip {
		align-self: flex-end;
		margin-left: 31px;
	}
</style>
